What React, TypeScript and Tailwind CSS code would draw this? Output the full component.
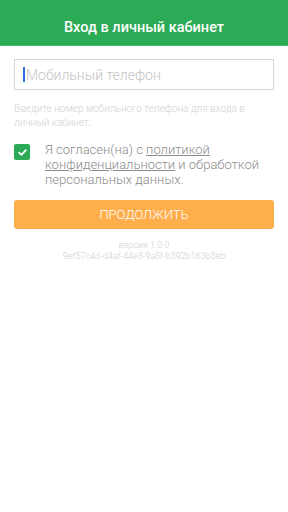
import React from "react";

export default function App() {
  return (
    <div className="w-[288px] h-[512px] bg-white" style={{ fontFamily: "Roboto, 'Noto Sans', sans-serif" }}>
      <div className="h-[46px] bg-[#2cab56] border-b border-[#3cc066] flex items-end justify-center pb-[7px]">
        <span className="text-white text-[14.5px] font-medium leading-[20px]">Вход в личный кабинет</span>
      </div>
      <div className="px-[14px] pt-[13px]">
        <div className="h-[31px] border border-[#d6d6d6] flex items-center pl-[8px]">
          <span className="w-[2px] h-[15px] bg-[#2f6ee6] mr-[1px]" />
          <span className="text-[14px] font-light text-[#c4c4c4] leading-none">Мобильный телефон</span>
        </div>
        <p className="mt-[12px] text-[10px] font-light leading-[14px] text-[#d2d2d2]">
          Введите номер мобильного телефона для входа в личный кабинет.
        </p>
        <div className="mt-[12px] flex items-start">
          <div className="w-[16px] h-[16px] rounded-[2px] bg-[#2cab56] flex items-center justify-center mt-[2px] shrink-0">
            <svg width="9" height="7" viewBox="0 0 9 7" fill="none">
              <path d="M1.2 3.6L3.5 5.8L7.8 1.2" stroke="white" strokeWidth="1.8" strokeLinecap="round" strokeLinejoin="round" />
            </svg>
          </div>
          <p className="ml-[15px] text-[13px] font-light leading-[15px] text-[#8c8c8c]">
            Я согласен(на) с <span className="underline">политикой конфиденциальности</span> и обработкой персональных данных.
          </p>
        </div>
        <div className="mt-[13px] h-[29px] rounded-[3px] bg-[#ffae4c] flex items-center justify-center">
          <span className="text-white text-[13px] font-light leading-none">ПРОДОЛЖИТЬ</span>
        </div>
        <div className="mt-[11px] text-center text-[9px] font-light leading-[11px] text-[#cfcfcf]">
          <div>версия 1.0.0</div>
          <div>9ef57c4d-d4af-44e8-9a8f-b392b163b3eb</div>
        </div>
      </div>
    </div>
  );
}
